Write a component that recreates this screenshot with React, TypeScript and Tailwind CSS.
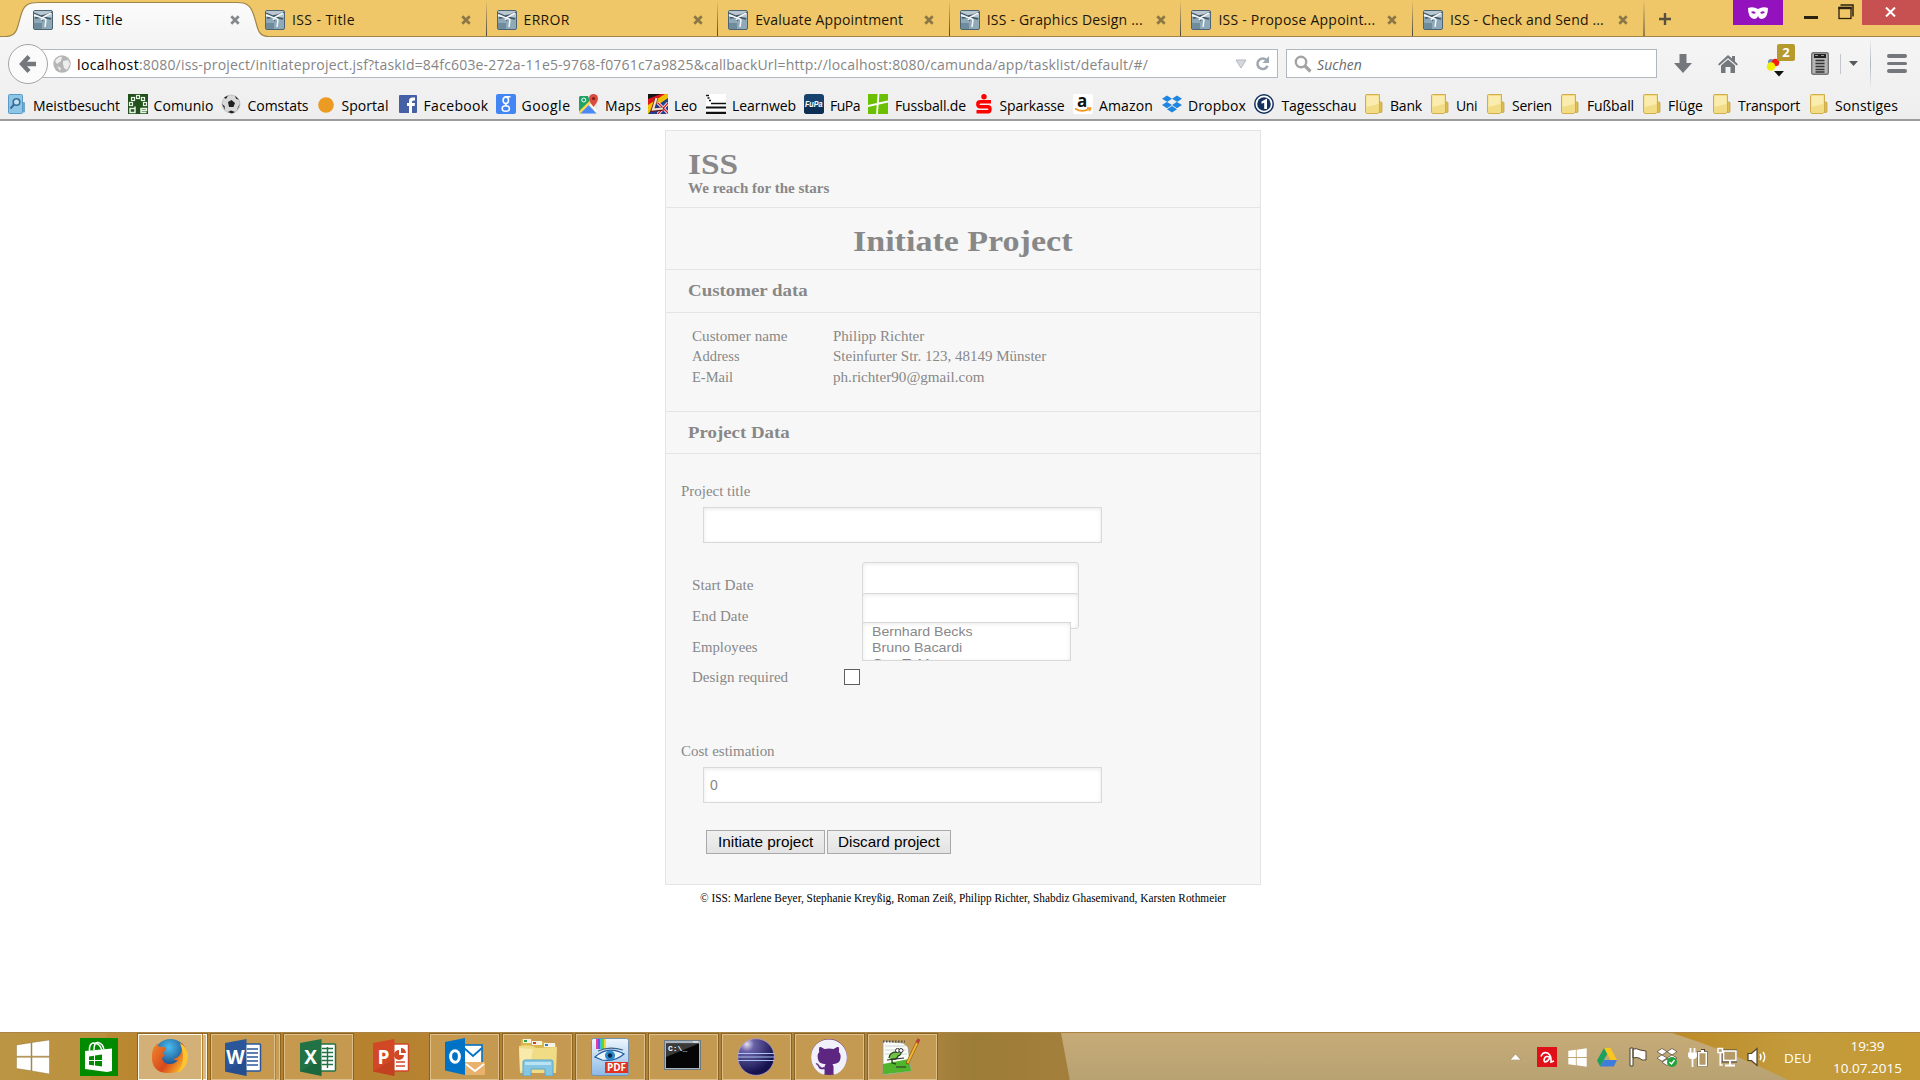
import React, { useLayoutEffect, useRef } from "react";
import { FaGithub, FaDropbox, FaWindows } from "react-icons/fa";

const UI = "font-['Open_Sans','Noto_Sans',sans-serif]";
const SERIF = "font-['Liberation_Serif',serif]";
const SANS = "font-['Liberation_Sans',sans-serif]";

/** A single line of text tracked to fill the given width. */
function Fit({ w, className = "", children }: { w: number; className?: string; children: string }) {
  const ref = useRef<HTMLSpanElement>(null);
  useLayoutEffect(() => {
    const el = ref.current;
    if (!el) return;
    el.style.letterSpacing = "0px";
    const natural = el.getBoundingClientRect().width;
    el.style.letterSpacing = `${(w - natural) / children.length}px`;
  }, [w, children]);
  return (
    <span ref={ref} className={`inline-block shrink-0 whitespace-pre ${className}`}>
      {children}
    </span>
  );
}

/** A single line of text whose glyphs are widened or narrowed to the given width. */
function Wide({ w, className = "", children }: { w: number; className?: string; children: string }) {
  const ref = useRef<HTMLSpanElement>(null);
  useLayoutEffect(() => {
    const el = ref.current;
    if (el) el.style.transform = `scaleX(${w / el.offsetWidth})`;
  }, [w, children]);
  return (
    <span className={`block shrink-0 text-left ${className}`} style={{ width: w }}>
      <span ref={ref} className="inline-block origin-left whitespace-pre align-top">{children}</span>
    </span>
  );
}

/* ---------- browser tabs ---------- */

function TabIcon() {
  return (
    <svg width="20" height="20" viewBox="0 0 20 20" className="shrink-0">
      <rect x=".5" y=".5" width="19" height="19" rx="1.5" fill="#8fa9b8" stroke="#4d6371" />
      <rect x="1" y="1" width="18" height="6" fill="#b9c8d0" />
      <rect x="1" y="13" width="8" height="6" fill="#6f8c9d" />
      <path d="M1 3l7 3 5-1 6-3M2 8l8-1 8 2M11 6l-2 5" stroke="#405564" strokeWidth="1.3" fill="none" />
      <path d="M1 5l8 3 9-5M8 10q3-3 5 0l-1 7" stroke="#f3f7f9" strokeWidth="1.5" fill="none" />
    </svg>
  );
}

function CloseX({ color }: { color: string }) {
  return (
    <svg width="10" height="10" viewBox="0 0 10 10" className="shrink-0">
      <path d="M1.3 1.3l7.4 7.4M8.7 1.3L1.3 8.7" stroke={color} strokeWidth="2.7" />
    </svg>
  );
}

function Tab({ title, w, last }: { title: string; w: number; last?: boolean }) {
  return (
    <div className="flex h-9 w-[231.6px] shrink-0 items-center pt-1 pl-[10px]">
      <TabIcon />
      <Fit w={w} className="ml-[7px] text-[14px] leading-5 text-[#1c1608]">{title}</Fit>
      <div className="mr-[14.500px] ml-auto flex"><CloseX color="#8b7646" /></div>
      <div className={last ? "-mt-1 h-9 w-0.5 bg-gradient-to-b from-[#efc768] to-[#8d7b51]" : "-mt-1 h-9 w-px bg-gradient-to-b from-[#efc768] to-[#4c4a40]"} />
    </div>
  );
}

function TabStrip() {
  return (
    <div className="flex h-[37px] shrink-0 border-b border-[#9f8646] bg-[#efc768]">
      <div className="relative h-[37px] w-[255px] shrink-0">
        <svg width="272" height="37" viewBox="0 0 272 37" className="absolute top-0 left-0">
          <defs>
            <linearGradient id="tab" x1="0" y1="0" x2="0" y2="1">
              <stop offset="0" stopColor="#fbfbfb" />
              <stop offset="1" stopColor="#f5f5f5" />
            </linearGradient>
          </defs>
          <path d="M3 37V36.5H6C19 36 17 25 22 12C25 4 30 2.5 38 2.5H237C246 2.5 250 5 253 13C258 25 256 36 268 36.5V37Z" fill="url(#tab)" />
          <path d="M0 36.5H6C19 36 17 25 22 12C25 4 30 2.5 38 2.5H237C246 2.5 250 5 253 13C258 25 256 36 268 36.5H272" fill="none" stroke="#9f8646" strokeWidth="1.2" />
        </svg>
        <div className="relative flex h-9 items-center pt-1 pl-[33px]">
          <TabIcon />
          <Fit w={62} className="ml-2 text-[14px] leading-5 text-black">ISS - Title</Fit>
          <div className="mr-[15px] ml-auto flex"><CloseX color="#85888c" /></div>
        </div>
      </div>
      <Tab title="ISS - Title" w={63} />
      <Tab title="ERROR" w={46} />
      <Tab title="Evaluate Appointment" w={148} />
      <Tab title="ISS - Graphics Design ..." w={156} />
      <Tab title="ISS - Propose Appoint..." w={157} />
      <Tab title="ISS - Check and Send ..." w={154} last />
      <svg width="14" height="14" viewBox="0 0 14 14" className="mt-3 ml-[13px] shrink-0">
        <path d="M7 1v12M1 7h12" stroke="#57503c" strokeWidth="2.4" />
      </svg>
      <div className="ml-auto flex items-start">
        <div className="flex h-[25px] w-[50px] items-center justify-center bg-[#9312bd]">
          <svg width="20" height="12" viewBox="0 0 20 12">
            <path fillRule="evenodd" fill="#fff" d="M0 1Q5-1 10 2Q15-1 20 1Q20 11 14 12Q11 12 10 9Q9 12 6 12Q0 11 0 1ZM3 5Q5 8 8 6Q6 3 3 5ZM17 5Q15 8 12 6Q14 3 17 5Z" />
          </svg>
        </div>
        <div className="mt-4 ml-[21px] h-[2.5px] w-[14px] bg-[#29220f]" />
        <svg width="16" height="16" viewBox="0 0 16 16" className="mt-1 ml-5">
          <path d="M2.500 1H15V12.500" fill="none" stroke="#29220f" strokeWidth="1.5" />
          <rect x="1" y="3.500" width="12" height="11" fill="none" stroke="#29220f" strokeWidth="1.3" />
          <path d="M.4 4h13.200" stroke="#29220f" strokeWidth="2.4" />
        </svg>
        <div className="ml-2 flex h-[25px] w-[58px] items-center justify-center bg-[#c75050]">
          <svg width="11" height="10" viewBox="0 0 11 10" className="-mt-0.5 -ml-0.5">
            <path d="M1 .5l9 9M10 .5l-9 9" stroke="#fff" strokeWidth="2" />
          </svg>
        </div>
      </div>
    </div>
  );
}

/* ---------- navigation bar ---------- */

function NavBar() {
  return (
    <div className="flex h-[53px] items-center">
      <div className="relative z-10 ml-2 flex h-10 w-10 shrink-0 items-center justify-center rounded-full border border-[#a2a5a8] bg-[#fbfbfb]">
        <svg width="18" height="20" viewBox="0 0 18 20">
          <path d="M10 2.500L3 10l7 7.500M3 10h14" fill="none" stroke="#74777b" strokeWidth="4.300" />
        </svg>
      </div>
      <div className="-ml-[7px] flex h-[29px] w-[1237px] shrink-0 items-center border border-[#b0b7be] bg-white pl-[11px]">
        <svg width="18" height="18" viewBox="0 0 18 18" className="shrink-0">
          <circle cx="9" cy="9" r="8.700" fill="#b5b5b5" />
          <path d="M2 6q4-5 7-4l-1 4-4 3zM10 6l5-1 2 4-3 6-3-2-1-4zM4 11l4 2-1 3z" fill="#ededed" />
        </svg>
        <Fit w={62} className="ml-[6px] pt-[2px] text-[14px] leading-5 text-black">localhost</Fit>
        <Fit w={1009} className="pt-[2px] text-[14px] leading-5 text-[#858585]">:8080/iss-project/initiateproject.jsf?taskId=84fc603e-272a-11e5-9768-f0761c7a9825&callbackUrl=http://localhost:8080/camunda/app/tasklist/default/#/</Fit>
        <svg width="12" height="10" viewBox="0 0 12 10" className="mr-[8px] ml-auto">
          <path d="M1 1h10L6 9z" fill="#d5d9de" stroke="#b3b8bf" />
        </svg>
        <svg width="15" height="15" viewBox="0 0 15 15" className="mr-[7px]">
          <path d="M11.500 4.200A5.200 5.200 0 1 0 12.500 9.700" fill="none" stroke="#a0a9b2" strokeWidth="2.600" />
          <path d="M14 0v7H7.500z" fill="#a0a9b2" />
        </svg>
      </div>
      <div className="ml-[8px] flex h-[29px] w-[371px] shrink-0 items-center border border-[#b0b7be] bg-white pl-[7px]">
        <svg width="18" height="18" viewBox="0 0 18 18">
          <circle cx="7" cy="7" r="5.200" fill="none" stroke="#a3a3a3" strokeWidth="2.400" />
          <path d="M10.500 10.500l6 6" stroke="#a3a3a3" strokeWidth="3.200" />
        </svg>
        <Fit w={45} className="ml-[5px] pt-[2px] text-[14px] leading-5 text-[#6a6a6a] italic">Suchen</Fit>
      </div>
      <svg width="18" height="19" viewBox="0 0 18 19" className="ml-[17px] shrink-0">
        <path d="M5.500 0h7v9H18L9 19 0 9h5.500z" fill="#74777b" />
      </svg>
      <svg width="20" height="18" viewBox="0 0 20 18" className="ml-[26px] shrink-0">
        <path d="M10 0l4 3.600V1h3v5.400l3 2.800-1.300 1.300L10 3l-8.700 7.500L0 9.200z" fill="#74777b" />
        <path d="M3 10.500L10 4.500l7 6V18h-4.500v-6h-5v6H3z" fill="#74777b" />
      </svg>
      <div className="relative ml-[28px] h-10 w-8 shrink-0">
        <svg width="22" height="26" viewBox="0 0 22 26" className="absolute top-[13px] left-0">
          <circle cx="5" cy="5" r="3" fill="#6f8fc0" />
          <circle cx="9.500" cy="5.500" r="3.800" fill="#f31f12" />
          <circle cx="5" cy="9.500" r="4.300" fill="#f2ee00" />
          <path d="M8 14h10l-5 5.500z" fill="#111" />
        </svg>
        <div className="absolute top-0 left-[11px] flex h-[17px] w-[18px] items-center justify-center rounded-[2px] bg-[#b79a2e] font-['Open_Sans'] text-[13px] leading-none font-bold text-white">2</div>
      </div>
      <svg width="18" height="23" viewBox="0 0 18 23" className="ml-[13px] shrink-0">
        <rect x=".7" y=".7" width="16.600" height="21.600" rx="1.500" fill="#b5b5b5" stroke="#747474" strokeWidth="1.400" />
        <path d="M3 2h12v4H3z" fill="#222" />
        <path d="M4 3.500h3M10 3.500h3" stroke="#999" strokeWidth="1.200" />
        <path d="M4.500 8.500h9M4.500 11.500h9M4.500 14.500h9M4.500 17.500h9M4.500 20h9" stroke="#333" strokeWidth="1.600" />
      </svg>
      <div className="ml-[11px] h-5 w-px bg-[#c3c7cb]" />
      <svg width="9" height="5" viewBox="0 0 9 5" className="ml-2 shrink-0"><path d="M0 0h9L4.500 5z" fill="#55585c" /></svg>
      <div className="ml-[12px] h-[48px] w-px bg-gradient-to-b from-[#eeeeee] via-[#aeb8c2] to-[#eeeeee]" />
      <div className="ml-4 flex flex-col gap-1">
        <div className="h-[3.500px] w-5 rounded-full bg-[#74777b]" />
        <div className="h-[3.500px] w-5 rounded-full bg-[#74777b]" />
        <div className="h-[3.500px] w-5 rounded-full bg-[#74777b]" />
      </div>
    </div>
  );
}

/* ---------- bookmarks ---------- */

const Folder = () => (
  <svg width="18" height="20" viewBox="0 0 18 20">
    <rect x="12" y="8" width="5" height="10.500" rx="1" fill="#e0bd4d" stroke="#b99f42" strokeWidth=".7" />
    <path d="M.5 1.500Q.5.500 1.500.5H14.500V18L13 19.500H1.500L.5 18z" fill="#f2dc85" stroke="#d0ae4c" />
    <path d="M1.500 2h12v8L1.500 13z" fill="#f9ecae" />
  </svg>
);

const icons: Record<string, React.ReactNode> = {
  most: (
    <svg width="18" height="20" viewBox="0 0 18 20">
      <rect x="12" y="8" width="5" height="10.500" rx="1" fill="#6fa7cb" />
      <rect x=".5" y=".5" width="14" height="19" rx="1" fill="#8ec4e6" stroke="#5b9cc7" />
      <circle cx="8.500" cy="8" r="3.300" fill="#c2e0f3" stroke="#346f9b" strokeWidth="1.600" />
      <path d="M6 10.500l-3.500 4" stroke="#346f9b" strokeWidth="2" />
    </svg>
  ),
  comunio: (
    <svg width="20" height="20" viewBox="0 0 20 20">
      <rect width="20" height="20" fill="#21521b" />
      <g fill="none" stroke="#e9f2e7" strokeWidth="1.200">
        <rect x="3.500" y="3.500" width="3" height="3" /><rect x="8.500" y="1.500" width="3" height="3" /><rect x="13.500" y="3.500" width="3" height="3" />
        <rect x="1.500" y="8.500" width="3" height="3" /><rect x="15.500" y="8.500" width="3" height="3" />
        <path d="M7 12.500v6H2v-4h5M18.500 18.500H13v-4h5.500v2H13" strokeWidth="1.500" />
      </g>
    </svg>
  ),
  ball: (
    <svg width="20" height="20" viewBox="0 0 20 20">
      <circle cx="10" cy="10" r="9" fill="#d8d8d8" stroke="#a9a9a9" strokeWidth=".6" />
      <path d="M7 8l3.500-2L14 9l-1.500 4H8zM3 3.500L7 1.500 5 5zM14 1.800l4 4-3-1zM1 10l2.500 2L4 16zM19 10l-2 3-1 3.500zM7 18l3-1.500 4 1.500-3 1.500z" fill="#202020" />
    </svg>
  ),
  sportal: <svg width="16" height="16" viewBox="0 0 16 16" className="mt-0.5"><circle cx="8" cy="8" r="7.800" fill="#eb9a22" /></svg>,
  facebook: (
    <svg width="18" height="18" viewBox="0 0 18 18"><rect width="18" height="18" rx="1" fill="#4560a5" /><path d="M10 18v-7H8V8h2V6q0-3.500 3.500-3.500H16v3h-1.500Q13 5.500 13 7v1h3l-.4 3H13v7z" fill="#fff" /></svg>
  ),
  google: (
    <svg width="20" height="20" viewBox="0 0 20 20"><rect width="20" height="20" rx="2" fill="#4285f4" /><ellipse cx="9.800" cy="6.200" rx="2.700" ry="3.300" fill="none" stroke="#fff" strokeWidth="1.600" /><ellipse cx="9.800" cy="14.500" rx="3.600" ry="2.800" fill="none" stroke="#fff" strokeWidth="1.600" /><path d="M10 2.700h4.500M10.500 9.200q-2 1.300.5 2.600" stroke="#fff" strokeWidth="1.400" fill="none" /></svg>
  ),
  maps: (
    <svg width="20" height="20" viewBox="0 0 20 20"><rect x="0" y="2" width="18" height="18" rx="1" fill="#e8e8e4" /><path d="M0 3v16L11 8 9 2H1z" fill="#1ea362" /><path d="M1 19.500L9.500 11l8 8.500z" fill="#4a89f3" /><path d="M0 19L13 6" stroke="#ffd34a" strokeWidth="2.400" /><path d="M12 10l6 8" stroke="#fff" strokeWidth="2" /><path d="M14.500 13Q10 7.500 10 4.500a4.500 4.500 0 0 1 9 0Q19 7.500 14.500 13z" fill="#dd4b3e" /><circle cx="14.500" cy="4.500" r="1.600" fill="#7d2017" /><circle cx="4.800" cy="6" r="2" fill="none" stroke="#fff" /></svg>
  ),
  leo: (
    <svg width="20" height="20" viewBox="0 0 20 20"><rect width="20" height="20" fill="#253f8f" /><path d="M0 0h17L0 6z" fill="#151515" /><path d="M13 0L0 5v8L20 0z" fill="#e0141b" /><path d="M20 0h-3L0 11v9L9 9l4-3z" fill="#f5c400" /><path d="M20 0v4L11 10l-2-1z" fill="#f5c400" /><path d="M10 9l10 10M10 20L20 9" stroke="#fff" strokeWidth="3" /><path d="M10 9l10 10M10 20L20 9" stroke="#cf1b2b" strokeWidth="1.400" /><path d="M8.500 4L4.500 16l11-1" fill="none" stroke="#721515" strokeWidth="3.400" /><path d="M8.500 4L5 15.500 15 14.500" fill="none" stroke="#eee3cf" strokeWidth="2.200" /></svg>
  ),
  learnweb: (
    <svg width="20" height="20" viewBox="0 0 20 20"><rect width="20" height="20" fill="#fff" /><path d="M0 13.500h20M0 18.800h20" stroke="#111" strokeWidth="2.200" /><path d="M5 9.500h15M0 1.500h3M1.500 4h2M3 6.500h2" stroke="#111" strokeWidth="1.600" /></svg>
  ),
  fupa: (
    <svg width="20" height="20" viewBox="0 0 20 20" className="overflow-visible"><rect width="20" height="20" rx="3" fill="#17426e" /><path d="M0 13h20v4a3 3 0 0 1-3 3H3a3 3 0 0 1-3-3z" fill="#0d2f55" /><text x="1" y="12.500" fontSize="8.500" fontWeight="bold" fontStyle="italic" fontFamily="Liberation Sans" fill="#fff" textLength="17.500" lengthAdjust="spacingAndGlyphs">FuPa</text></svg>
  ),
  fussball: (
    <svg width="20" height="20" viewBox="0 0 20 20"><rect width="20" height="20" fill="#6cc004" /><path d="M10.500 0L9 20M0 12L20 7.500" stroke="#fff" strokeWidth="1.800" /></svg>
  ),
  sparkasse: (
    <svg width="16" height="20" viewBox="0 0 16 20"><circle cx="8" cy="2.800" r="2.700" fill="#f00" /><path d="M15 7.800H4.500Q1.800 7.800 1.800 10.200T4.500 12.800H12Q14 12.800 14 15.300T12 17.800H.5" fill="none" stroke="#f00" strokeWidth="3.400" /></svg>
  ),
  amazon: (
    <svg width="20" height="20" viewBox="0 0 20 20" className="overflow-visible"><rect width="20" height="20" rx="2" fill="#fff" /><text x="4" y="12.500" fontSize="17" fontWeight="bold" fontFamily="Open Sans" fill="#111">a</text><path d="M2 14.500q7 4.500 14 .5M14 14h3.500l-1 3" fill="none" stroke="#f4981f" strokeWidth="1.700" /></svg>
  ),
  dropbox: <FaDropbox size={20} color="#1f87e0" />,
  ard: (
    <svg width="20" height="20" viewBox="0 0 20 20"><circle cx="10" cy="10" r="10" fill="#14305f" /><circle cx="10" cy="10" r="8.500" fill="#fff" /><circle cx="10" cy="10" r="6.800" fill="#14305f" /><path d="M7.500 7.500L13 4.500V15h-2.800V8.800l-2.700 1z" fill="#fff" /></svg>
  ),
  folder: <Folder />,
};

// icon, label, label width, distance from icon start to label, distance to the next icon
const bookmarks: [string, string, number, number, number][] = [
  ["most", "Meistbesucht", 87, 25, 120],
  ["comunio", "Comunio", 60, 25.5, 93],
  ["ball", "Comstats", 61, 26.5, 97],
  ["sportal", "Sportal", 47, 23.5, 81],
  ["facebook", "Facebook", 65, 24.5, 97],
  ["google", "Google", 49, 25.5, 83],
  ["maps", "Maps", 36, 26, 69],
  ["leo", "Leo", 23, 26, 58],
  ["learnweb", "Learnweb", 64, 26, 98],
  ["fupa", "FuPa", 30, 26, 64],
  ["fussball", "Fussball.de", 71, 27, 108],
  ["sparkasse", "Sparkasse", 65, 23.5, 97],
  ["amazon", "Amazon", 54, 26, 89],
  ["dropbox", "Dropbox", 58, 26, 92],
  ["ard", "Tagesschau", 75, 27.5, 111],
  ["folder", "Bank", 32, 25, 66],
  ["folder", "Uni", 21, 25, 56],
  ["folder", "Serien", 40, 25, 74],
  ["folder", "Fußball", 47, 26, 82],
  ["folder", "Flüge", 35, 25, 70],
  ["folder", "Transport", 62, 25, 97],
  ["folder", "Sonstiges", 63, 25, 90],
];

function Bookmarks() {
  return (
    <div className="flex h-[29px] items-center pt-[2px] pl-2">
      {bookmarks.map(([icon, label, w, off, pitch]) => (
        <div key={label} className="flex shrink-0 items-center" style={{ width: pitch }}>
          <div className="-mt-1 shrink-0" style={{ width: off }}>{icons[icon]}</div>
          <Fit w={w} className="text-[14px] leading-5 text-black">{label}</Fit>
        </div>
      ))}
    </div>
  );
}

/* ---------- page ---------- */

const label = "text-[14.500px] leading-[20px]";
const field = "border border-[#d9d9d9] bg-white shadow-[inset_0_1px_4px_rgba(0,0,0,0.09)]";

function Page() {
  return (
    <div className={`ml-[665px] w-[596px] pt-[9px] ${SERIF}`}>
      <main className="h-[755px] border border-[#e4e4e4] bg-[#f7f7f7] text-[#888888]">
        <header className="flex h-[77px] flex-col border-b border-[#e4e4e4] pt-[17px] pl-[22px]">
          <Wide w={50} className="text-[30px] leading-[32px] font-bold">ISS</Wide>
          <Wide w={141} className="-mt-px text-[14.500px] leading-[18px] font-bold">We reach for the stars</Wide>
        </header>
        <h1 className="flex h-[62px] justify-center border-b border-[#e4e4e4] pt-[16px]">
          <Wide w={220} className="text-[30px] leading-[34px] font-bold">Initiate Project</Wide>
        </h1>
        <h2 className="flex h-[43px] items-center border-b border-[#e4e4e4] pl-[22px]">
          <Wide w={120} className="text-[17px] leading-5 font-bold">Customer data</Wide>
        </h2>
        <div className="flex h-[99px] border-b border-[#e4e4e4] pt-[13px] pl-[26px]">
          <div className="flex w-[141px] flex-col items-start">
            <Wide w={95} className={label}>Customer name</Wide>
            <Wide w={48} className={label}>Address</Wide>
            <Wide w={41} className={`${label} mt-px`}>E-Mail</Wide>
          </div>
          <div className="flex flex-col items-start">
            <Wide w={91} className={label}>Philipp Richter</Wide>
            <Wide w={213} className={label}>Steinfurter Str. 123, 48149 Münster</Wide>
            <Wide w={151} className={`${label} mt-px`}>ph.richter90@gmail.com</Wide>
          </div>
        </div>
        <h2 className="flex h-[42px] items-center border-b border-[#e4e4e4] pl-[22px]">
          <Wide w={102} className="text-[17px] leading-5 font-bold">Project Data</Wide>
        </h2>
        <div className="flex flex-col items-start pt-[27px] pl-[15px]">
          <Wide w={69} className={label}>Project title</Wide>
          <div className={`mt-[6px] ml-[22px] h-9 w-[399px] ${field}`} />
          <div className="mt-[19px] flex h-[127px] pl-[11px]">
            <div className="flex w-[151px] flex-col items-start gap-[11px] pt-[13px]">
              <Wide w={61} className={label}>Start Date</Wide>
              <Wide w={56} className={label}>End Date</Wide>
              <Wide w={65} className={label}>Employees</Wide>
              <Wide w={96} className={`${label} -mt-px`}>Design required</Wide>
            </div>
            <div>
              <div className={`ml-[19px] h-[36px] w-[217px] rounded-[3px] ${field}`} />
              <div className={`-mt-[5px] ml-[19px] h-9 w-[217px] rounded-[3px] ${field}`} />
              <div className={`relative -mt-[7px] ml-[19px] flex h-[39px] w-[209px] flex-col items-start overflow-hidden pt-px pl-[9px] text-[13.300px] leading-[16px] ${SANS} ${field}`}>
                <Wide w={101} className="h-4">Bernhard Becks</Wide>
                <Wide w={90} className="h-4">Bruno Bacardi</Wide>
                <Wide w={74} className="h-4">Cup T. Mug</Wide>
              </div>
              <div className="mt-2 ml-px h-4 w-4 border border-[#5e5e5e] bg-white" />
            </div>
          </div>
          <Wide w={94} className={`${label} mt-[52px]`}>Cost estimation</Wide>
          <div className={`mt-[6px] ml-[22px] flex h-9 w-[399px] items-center pl-[6px] text-[14px] ${SANS} ${field}`}>0</div>
          <div className={`mt-[27px] ml-[25px] flex gap-0.5 text-[14.500px] leading-5 text-black ${SANS}`}>
            <button className="flex h-6 w-[119px] items-center justify-center border border-[#a9a9a9] bg-gradient-to-b from-[#f0f0f0] to-[#e3e3e3]">
              <Wide w={95}>Initiate project</Wide>
            </button>
            <button className="flex h-6 w-[124px] items-center justify-center border border-[#a9a9a9] bg-gradient-to-b from-[#f0f0f0] to-[#e3e3e3]">
              <Wide w={102}>Discard project</Wide>
            </button>
          </div>
        </div>
      </main>
      <footer className="flex justify-center pt-[5px] text-black">
        <Wide w={526} className="text-[11.500px] leading-4">© ISS: Marlene Beyer, Stephanie Kreyßig, Roman Zeiß, Philipp Richter, Shabdiz Ghasemivand, Karsten Rothmeier</Wide>
      </footer>
    </div>
  );
}

/* ---------- taskbar ---------- */

function Office({ letter, color, dark, children }: { letter: string; color: string; dark: string; children: React.ReactNode }) {
  return (
    <svg width="37" height="37" viewBox="0 0 37 37">
      <rect x="18" y="5" width="17.500" height="27" rx="1" fill="#fff" stroke={color} strokeWidth="1.500" />
      {children}
      <path d="M0 4L21.500 0v37L0 32.500z" fill={color} />
      <path d="M0 32.500L21.500 20v17z" fill={dark} opacity=".35" />
      <text x="10.500" y="25" textAnchor="middle" fontSize="19" fontWeight="bold" fontFamily="Open Sans" fill="#fff">{letter}</text>
    </svg>
  );
}

function TaskButton({ active, stacked, plain, children }: { active?: boolean; stacked?: boolean; plain?: boolean; children: React.ReactNode }) {
  if (plain) return <div className="mr-0.5 flex h-12 w-[71px] items-center justify-center">{children}</div>;
  return (
    <div className="mr-0.5 flex h-12 w-[71px] border border-[#8a6425]">
      <div className={`flex flex-1 items-center justify-center border ${active ? "border-[#fdf8ec] bg-[#d2b078]" : "border-[#dcbf8b] bg-[#c89e56]/85"}`}>{children}</div>
      {stacked && <div className={`ml-px w-1 border border-l-0 ${active ? "border-[#fdf8ec] bg-[#d8bb8a]" : "border-[#dcbf8b] bg-[#c89e56]"}`} />}
    </div>
  );
}

const WinLogo = () => (
  <svg width="34" height="34" viewBox="0 0 34 34">
    <path d="M.5 5L15 2.700v13.500H.5zM16 2.500L33.500 0v16.200H16zM.5 17.300H15v13.400L.5 28.500zM16 17.300h17.500V34L16 31z" fill="#fff" stroke="#8c6a2c" strokeWidth=".4" />
  </svg>
);

function Taskbar() {
  return (
    <div className="relative flex h-12 overflow-hidden border-t border-[#a98444] bg-gradient-to-r from-[#b8933f] from-0% via-[#ba8229] via-10% to-[#a58544] to-[60%]">
      <svg width="1920" height="48" viewBox="0 0 1920 48" className="absolute top-0 left-0">
        <defs>
          <linearGradient id="sand" x1="0" y1="0" x2="0" y2="1"><stop offset="0" stopColor="#c6ab77" /><stop offset="1" stopColor="#b8a273" /></linearGradient>
          <linearGradient id="gold" x1="0" y1="0" x2="1" y2="0"><stop offset="0" stopColor="#bd8b27" /><stop offset=".5" stopColor="#c39b3c" /><stop offset="1" stopColor="#c59a34" /></linearGradient>
          <linearGradient id="left" x1="0" y1="0" x2="1" y2="0"><stop offset="0" stopColor="#97742f" stopOpacity="0" /><stop offset=".3" stopColor="#9c7d38" /><stop offset="1" stopColor="#a47f3c" /></linearGradient>
        </defs>
        <path d="M0 0h107q-5 25-18 48H0z" fill="#bd9847" opacity=".5" />
        <path d="M935 0h127l9 48H935z" fill="url(#left)" />
        <path d="M1061 0H1920V48H1070z" fill="url(#sand)" />
        <path d="M1672 0Q1730 18 1790 48H1920V0z" fill="url(#gold)" />
      </svg>
      <div className="relative flex w-[137px] shrink-0 items-center pl-4">
        <WinLogo />
        <svg width="38" height="38" viewBox="0 0 38 38" className="ml-[30px]">
          <rect width="38" height="38" fill="#008a00" />
          <path d="M5 13l27-2.500V33L27 34 5 31z" fill="#fff" />
          <path d="M9.500 13Q9 6 13 5q7 0 9 7M14 12Q14 4 18 4.500q5 1 6 7" fill="none" stroke="#fff" strokeWidth="1.500" />
          <path d="M9 18.500l5-.8v4.300H9zM15 17.500l7-1V22h-7zM9 23h5v4.500l-5-.7zM15 23h7v5.500l-7-1z" fill="#008a00" />
        </svg>
      </div>
      <div className="relative flex">
        <TaskButton active stacked>
          <svg width="38" height="38" viewBox="0 0 38 38">
            <defs>
              <radialGradient id="globe" cx=".45" cy=".25" r=".7"><stop offset="0" stopColor="#48bdf0" /><stop offset="1" stopColor="#12306e" /></radialGradient>
              <linearGradient id="fox" x1="0" y1="0" x2="1" y2=".6"><stop offset="0" stopColor="#f08a2c" /><stop offset=".6" stopColor="#d8481b" /><stop offset="1" stopColor="#f9b52a" /></linearGradient>
            </defs>
            <circle cx="19.500" cy="17.500" r="16.500" fill="url(#globe)" />
            <path d="M3 9Q5 8 6 5l2 4q4-1 7 1-1 4-4 5l3 2-3 3q1 6 8 6 5 0 8-4-2 1-5-1 6-1 8-6 2-5 1-10 6 7 5 15-3 15-17 15Q3 36 1 22 .5 14 3 9z" fill="url(#fox)" />
            <path d="M29 5q8 5 8 14-1 12-11 16 7-8 6-18-1-7-3-12z" fill="#fbc532" />
          </svg>
        </TaskButton>
        <TaskButton stacked>
          <Office letter="W" color="#2b579a" dark="#1c3f7c"><path d="M22 10h11M22 14h11M22 18h11M22 22h11M22 26h11" stroke="#2b579a" strokeWidth="1.500" /></Office>
        </TaskButton>
        <TaskButton>
          <Office letter="X" color="#217346" dark="#155230"><path d="M22 9.500h11M22 13.500h11M22 17.500h11M22 21.500h11M22 25.500h11M27.500 8v21" stroke="#217346" strokeWidth="1.400" /></Office>
        </TaskButton>
        <TaskButton plain>
          <Office letter="P" color="#d24726" dark="#a83316"><path d="M23 23h9M23 27h9" stroke="#d24726" strokeWidth="1.600" /><path d="M26 11a5 5 0 1 0 5 5h-5z" fill="#d24726" /><path d="M28 9a5 5 0 0 1 5 5h-5z" fill="#d24726" /></Office>
        </TaskButton>
        <TaskButton>
          <svg width="40" height="38" viewBox="0 0 40 38">
            <rect x="18" y="7" width="19" height="19" fill="#fff" stroke="#0072c6" strokeWidth="1.600" />
            <path d="M19 10l9 8 9-8" fill="none" stroke="#0072c6" strokeWidth="1.800" />
            <path d="M0 4L20 0v37L0 32.500z" fill="#0072c6" />
            <ellipse cx="10" cy="18.500" rx="4.400" ry="5.700" fill="none" stroke="#fff" strokeWidth="3" />
            <rect x="20" y="24" width="20" height="13" fill="#e8b16c" /><path d="M21 26l9 7 9-7" fill="none" stroke="#fff" strokeWidth="1.800" />
          </svg>
        </TaskButton>
        <TaskButton>
          <svg width="40" height="38" viewBox="0 0 40 38">
            <path d="M3 3Q3 1 5 1h8l2 3h12l2 2h9v29H2z" fill="#d9b64e" />
            <path d="M5 1h8v4H5zM14 3h10v4H14zM26 5h11v4H26z" fill="#f7f3e2" />
            <path d="M6 2h3v2H6z" fill="#2fa14b" /><path d="M15 4h3v2h-3z" fill="#d63c2e" /><path d="M27 6h3v2h-3z" fill="#2f80c8" />
            <path d="M1 8q12-2 17 2l21-1-1 26H2z" fill="#f0dc85" />
            <path d="M1 10l14 1-4 22H2z" fill="#f9efb9" opacity=".7" />
            <path d="M5 24q0-2 2-2h26q2 0 2 2v14h-8V31H13v7H5z" fill="#85c7e3" stroke="#5aa6cd" />
            <path d="M7 24h26v3H7z" fill="#b9e2f2" />
          </svg>
        </TaskButton>
        <TaskButton>
          <svg width="38" height="38" viewBox="0 0 38 38" className="-ml-0.5">
            <defs><linearGradient id="pdf" x1="0" y1="0" x2="0" y2="1"><stop offset="0" stopColor="#eef7fd" /><stop offset="1" stopColor="#8cb9e6" /></linearGradient></defs>
            <rect x=".5" y=".5" width="37" height="37" rx="2" fill="url(#pdf)" stroke="#7393b5" />
            <path d="M5 1h2v10H5z" fill="#e93a9f" /><path d="M7 1h2v10H7z" fill="#7b4be0" /><path d="M9 1h2v10H9z" fill="#35c3ea" /><path d="M11 1h2v10h-2z" fill="#5bd44c" /><path d="M13 1h2v10h-2z" fill="#f1d832" />
            <path d="M4 19q13-12 29-3-9 8-22 6z" fill="#e9f4fc" stroke="#245a9c" strokeWidth="1.200" />
            <circle cx="19" cy="17.500" r="5" fill="#2b8acb" /><circle cx="19" cy="17.500" r="2.200" fill="#0e2544" />
            <path d="M7 13Q18 8 32 12" fill="none" stroke="#3d628c" strokeWidth="1.300" />
            <rect x="14" y="24" width="23" height="11" fill="#e2321d" />
            <text x="25.500" y="33" textAnchor="middle" fontSize="10" fontWeight="bold" fontFamily="Open Sans" fill="#fff">PDF</text>
          </svg>
        </TaskButton>
        <TaskButton>
          <svg width="37" height="30" viewBox="0 0 37 30" className="-mt-1 -ml-0.5">
            <rect x=".5" y=".5" width="36" height="29" fill="#a9b5bf" stroke="#6e7982" /><rect x="2" y="3.500" width="33" height="24.500" fill="#050505" /><path d="M2 3.500h33L2 17z" fill="#3b3b3b" />
            <text x="4" y="11" fontSize="8" fontWeight="bold" fontFamily="Liberation Mono" fill="#fff">C:\_</text><path d="M29 2h5" stroke="#fff" />
          </svg>
        </TaskButton>
        <TaskButton>
          <svg width="38" height="38" viewBox="0 0 38 38" className="-ml-0.5">
            <defs><radialGradient id="ecl" cx=".25" cy=".15" r=".8"><stop offset="0" stopColor="#e4e0f2" /><stop offset=".25" stopColor="#6a62a8" /><stop offset="1" stopColor="#15124f" /></radialGradient></defs>
            <circle cx="19" cy="19" r="18.300" fill="url(#ecl)" stroke="#b89cc8" strokeWidth=".8" />
            <path d="M1 15.500h36M.5 19h37M1 22.500h36" stroke="#a9c2ee" strokeWidth="1.200" />
          </svg>
        </TaskButton>
        <TaskButton>
          <div className="-ml-0.5 flex h-9 w-9 items-center justify-center rounded-full bg-[#5d2680]"><FaGithub size={37} color="#f0f1fa" /></div>
        </TaskButton>
        <TaskButton>
          <svg width="38" height="38" viewBox="0 0 38 38" className="-ml-1">
            <path d="M1 3l20 2 5 4 3 24L1 37z" fill="#fbfbf8" stroke="#9b9b91" strokeWidth=".8" />
            <path d="M3 8h20M3 12h21M3 16h22" stroke="#ccd5d0" />
            <path d="M1 26l26-5 2 12L1 36.500z" fill="#50b52d" />
            <path d="M1 3.500h22" stroke="#555" strokeWidth="2" strokeDasharray="1.500 1.500" />
            <path d="M7 20q1-6 7-6 1-4 5-2 1 5-3 6-1 4-6 3v4l4 1" fill="#72c247" stroke="#294e21" strokeWidth="1.300" />
            <circle cx="15.500" cy="12.500" r="2" fill="#fff" stroke="#333" /><circle cx="19" cy="12.500" r="2" fill="#fff" stroke="#333" />
            <path d="M5 22l17-2M14 29h10" stroke="#2c2c2c" strokeWidth="1.200" />
            <path d="M36 3L25 26" stroke="#8c5a15" strokeWidth="3.200" /><path d="M36 3L25.500 25" stroke="#f4b52c" strokeWidth="2" /><path d="M37 1l-2 4" stroke="#b8403a" strokeWidth="3" />
          </svg>
        </TaskButton>
      </div>
      <div className="relative ml-auto flex items-center pt-px">
        <svg width="11" height="6" viewBox="0 0 11 6"><path d="M0 6L5.500 0 11 6z" fill="#fff" stroke="#8a7751" strokeWidth=".5" /></svg>
        <svg width="20" height="20" viewBox="0 0 20 20" className="ml-[16px]">
          <rect width="20" height="20" fill="#e01019" /><path d="M4 9.500Q6 4.500 10.500 6q4 2 3.500 9l3-1M13.500 10.500q-4-2-5.500 0-2 3 0 4.500 2.500 0 5-4.500" fill="none" stroke="#fff" strokeWidth="1.600" />
        </svg>
        <FaWindows size={21} color="#fff" className="ml-[10px]" />
        <svg width="20" height="19" viewBox="0 0 20 19" className="ml-[9px]">
          <path d="M7 0h6.500L20 12h-6.500z" fill="#fbc61e" /><path d="M7 0L0 12.500 3.200 18.500 10.200 6z" fill="#1ca05d" /><path d="M7 12h13l-3.200 6.500H3.200z" fill="#3f7ddb" />
        </svg>
        <svg width="18" height="20" viewBox="0 0 18 20" className="ml-3">
          <path d="M1 1h3v18H1zM4 2q4-1 7 1l6 1v9q-4 1-7-2-3-1-6 0z" fill="#fff" stroke="#4d4230" />
        </svg>
        <div className="relative ml-[10px] h-5 w-5">
          <FaDropbox size={20} color="#fff" className="[stroke:#4d4230] [stroke-width:18px]" />
          <svg width="10" height="10" viewBox="0 0 10 10" className="absolute right-0 bottom-0"><circle cx="5" cy="5" r="5" fill="#21a13a" /><path d="M2.500 5l2 2 3-4" stroke="#fff" strokeWidth="1.400" fill="none" /></svg>
        </div>
        <svg width="20" height="20" viewBox="0 0 20 20" className="ml-[11px]">
          <path d="M9.500 4H13V2h4v2h2.500v15.500h-10z" fill="#4d4230" /><rect x="10.700" y="5.500" width="7.600" height="13" fill="#b39a66" stroke="#fff" strokeWidth="1.500" /><rect x="13" y="3" width="3" height="2" fill="#fff" />
          <path d="M2.500 1v5M6.500 1v5M1 6.500h7v3q-1 2-3.500 2T1 9.500zM4.500 11v9" stroke="#fff" strokeWidth="1.800" fill="#fff" />
        </svg>
        <svg width="20" height="20" viewBox="0 0 20 20" className="ml-[9px]">
          <rect x="6.500" y="4" width="13" height="10" fill="#b39a66" stroke="#4d4230" strokeWidth="3" /><rect x="6.500" y="4" width="12.500" height="9.500" fill="#b39a66" stroke="#fff" strokeWidth="1.600" />
          <path d="M13 14v3.500M8 18.500h10" stroke="#fff" strokeWidth="1.800" /><rect x="1" y="1.500" width="4.500" height="4" fill="#b39a66" stroke="#fff" strokeWidth="1.500" /><path d="M3.200 6v12h2.500" stroke="#fff" strokeWidth="1.500" fill="none" />
        </svg>
        <svg width="21" height="20" viewBox="0 0 21 20" className="ml-[10px]">
          <path d="M1 6.500h3.500L10 1.500v17l-5.500-5H1z" fill="#fff" stroke="#4d4230" strokeWidth="1.200" /><path d="M13 7q2 3 0 6M16 5q3.500 5 0 10" stroke="#fff" strokeWidth="1.400" fill="none" />
        </svg>
        <Fit w={28} className="ml-[16px] pt-px text-[13.500px] leading-5 text-white">DEU</Fit>
        <div className="mr-[18px] ml-[21px] flex w-[69px] flex-col items-center text-[13.500px] leading-[22px] text-white">
          <Fit w={34}>19:39</Fit>
          <Fit w={69}>10.07.2015</Fit>
        </div>
      </div>
    </div>
  );
}

export default function App() {
  return (
    <div className={`flex h-[1080px] w-[1920px] flex-col overflow-hidden bg-white ${UI}`}>
      <TabStrip />
      <div className="h-[84px] shrink-0 border-b-2 border-[#9c9c9c] bg-gradient-to-b from-[#f5f5f5] to-[#eeeeee]">
        <NavBar />
        <Bookmarks />
      </div>
      <Page />
      <div className="mt-auto"><Taskbar /></div>
    </div>
  );
}
